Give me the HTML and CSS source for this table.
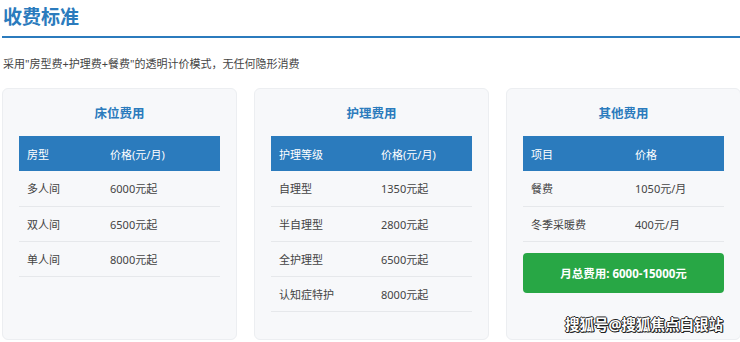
FILE: index.html
```html
<!DOCTYPE html>
<html lang="zh-CN">
<head>
<meta charset="utf-8">
<link rel="stylesheet" href="styles.css">
</head>
<body>
<div class="page">
  <h1 class="title">收费标准</h1>
  <p class="intro">采用"房型费+护理费+餐费"的透明计价模式，无任何隐形消费</p>
  <div class="cards">
    <div class="card">
      <h2 class="card-title">床位费用</h2>
      <table class="fee fee-bed">
        <thead><tr><th>房型</th><th>价格(元/月)</th></tr></thead>
        <tbody>
          <tr><td>多人间</td><td>6000元起</td></tr>
          <tr><td>双人间</td><td>6500元起</td></tr>
          <tr><td>单人间</td><td>8000元起</td></tr>
        </tbody>
      </table>
    </div>
    <div class="card">
      <h2 class="card-title">护理费用</h2>
      <table class="fee fee-care">
        <thead><tr><th>护理等级</th><th>价格(元/月)</th></tr></thead>
        <tbody>
          <tr><td>自理型</td><td>1350元起</td></tr>
          <tr><td>半自理型</td><td>2800元起</td></tr>
          <tr><td>全护理型</td><td>6500元起</td></tr>
          <tr><td>认知症特护</td><td>8000元起</td></tr>
        </tbody>
      </table>
    </div>
    <div class="card">
      <h2 class="card-title">其他费用</h2>
      <table class="fee fee-other">
        <thead><tr><th>项目</th><th>价格</th></tr></thead>
        <tbody>
          <tr><td>餐费</td><td>1050元/月</td></tr>
          <tr><td>冬季采暖费</td><td>400元/月</td></tr>
        </tbody>
      </table>
      <div class="total">月总费用: 6000-15000元</div>
    </div>
  </div>
  <div class="watermark">搜狐号@搜狐焦点白银站</div>
</div>
</body>
</html>
```
FILE: styles.css
```css
html, body {
  margin: 0;
  padding: 0;
  background: #ffffff;
  overflow: hidden;
}
body {
  font-family: "Noto Sans", "Noto Sans CJK SC", sans-serif;
  color: #333333;
}
.page {
  position: relative;
  width: 742px;
  height: 342px;
  padding-left: 2px;
  box-sizing: border-box;
}
.title {
  margin: 0;
  padding: 4px 0 6px 1px;
  font-size: 19px;
  line-height: 26px;
  font-weight: 700;
  color: #2b7bbd;
  border-bottom: 2px solid #2b7bbd;
  width: 738px;
}
.intro {
  margin: 0;
  padding: 17px 0 0 1px;
  font-size: 11px;
  line-height: 18px;
  color: #444444;
}
.cards {
  display: grid;
  grid-template-columns: 235px 235px 235px;
  column-gap: 17px;
  margin-top: 15px;
}
.card {
  background: #f7f8fa;
  border: 1px solid #eceef1;
  border-radius: 6px;
  padding: 15px 16px 12px;
  height: 252px;
  box-sizing: border-box;
}
.card-title {
  margin: 0 0 12px;
  text-align: center;
  font-size: 12.5px;
  line-height: 20px;
  font-weight: 700;
  color: #2b7bbd;
}
.fee {
  width: 100%;
  border-collapse: collapse;
  font-size: 11px;
}
.fee th {
  background: #2b7bbd;
  color: #ffffff;
  font-weight: 400;
  text-align: left;
  height: 35px;
  padding: 0 8px;
  box-sizing: border-box;
}
.fee-bed th:first-child {
  width: 83px;
}
.fee-care th:first-child {
  width: 102px;
}
.fee-other th:first-child {
  width: 104px;
}
.fee td {
  height: 35px;
  padding: 0 8px;
  border-bottom: 1px solid #e6e8eb;
  color: #444444;
  box-sizing: border-box;
}
.total {
  margin-top: 11px;
  height: 40px;
  display: flex;
  align-items: center;
  justify-content: center;
  background: #28a745;
  color: #ffffff;
  font-weight: 700;
  font-size: 11.5px;
  border-radius: 4px;
}
.watermark {
  position: absolute;
  left: 565px;
  top: 314px;
  font-size: 14.5px;
  line-height: 20px;
  font-weight: 700;
  color: #ffffff;
  text-shadow: 1px 1px 0 #222, -1px 0 0 #222, 0 -1px 0 #222, 1px 0 0 #222, 0 1px 0 #222;
}
```
